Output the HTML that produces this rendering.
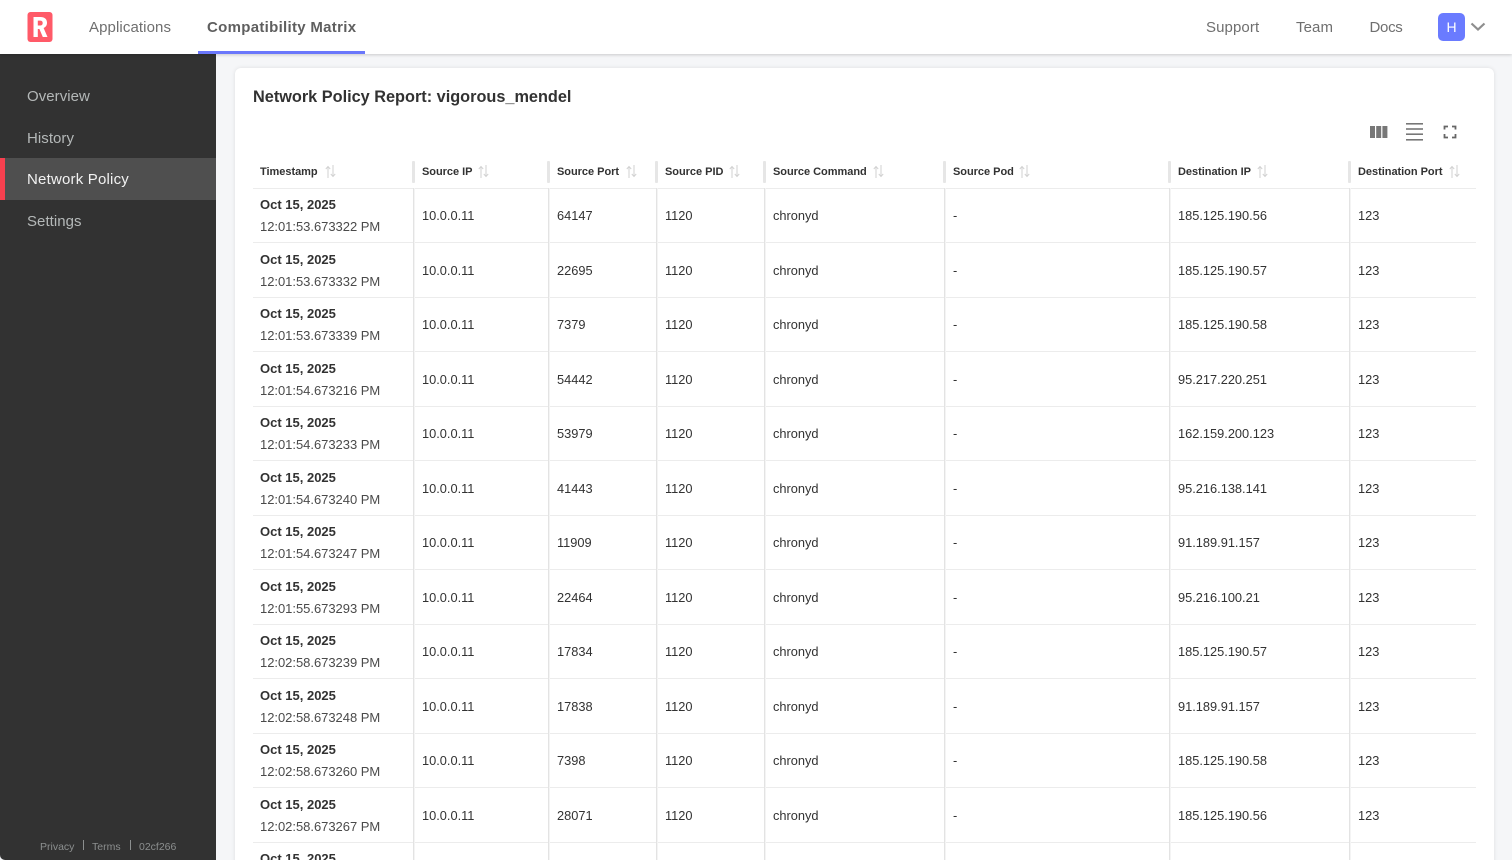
<!DOCTYPE html>
<html><head><meta charset="utf-8"><title>Network Policy</title>
<style>
*{box-sizing:border-box}
html,body{margin:0;padding:0;width:1512px;height:860px;overflow:hidden;background:#f5f6f8;font-family:"Liberation Sans",sans-serif;color:#323232}
#wrap{position:absolute;left:0;top:0;width:1512px;height:860px;overflow:hidden;background:#f5f6f8}
.a{position:absolute;white-space:nowrap}
#top{position:absolute;left:0;top:0;width:1512px;height:54px;background:#fff;box-shadow:0 1px 3px rgba(0,0,0,.18);z-index:3}
.nav{font-size:15px;color:#6f6f6f;line-height:20px;top:18px;letter-spacing:.1px}
#side{position:absolute;left:0;top:54px;width:216px;height:806px;background:#323232;border-bottom-left-radius:5px;z-index:2}
.si{position:absolute;left:27px;font-size:15px;line-height:20px;color:#b4b8b8;letter-spacing:.05px}
.ft{font-size:10.5px;color:#8c8f8f;line-height:14px;top:786px}
#card{position:absolute;left:235px;top:68px;width:1259px;height:820px;background:#fff;border-radius:6px;box-shadow:0 0 4px rgba(0,0,0,.1)}
.th{position:absolute;top:165px;font-size:11px;font-weight:bold;line-height:14px;color:#323232;white-space:nowrap;letter-spacing:-.03px}
.hd{position:absolute;top:161px;width:3px;height:22px;background:#e6e6e6;border-radius:1px}
.vl{position:absolute;top:188px;width:2px;height:672px;background:linear-gradient(90deg,#e3e3e3 50%,#f4f4f4 50%)}
.s{position:absolute;top:165px}
.row{position:absolute;left:253px;width:1223px;height:54.5px;border-top:1px solid #ececec}
.row div{position:absolute;white-space:nowrap;font-size:12.8px;line-height:16px;top:19.3px;color:#323232}
.row .d{left:7px;top:8.3px;font-size:13px;font-weight:bold;color:#323232}
.row .t{left:7px;top:30.3px;font-size:13px;color:#4a4a4a;letter-spacing:-.03px}
.c2{left:169px}.c3{left:304px}.c4{left:412px}.c5{left:520px}.c6{left:700px}.c7{left:925px}.c8{left:1105px}
</style></head><body>
<div id="wrap">
<div id="top">
<svg class="a" style="left:27px;top:12px" width="26" height="30" viewBox="0 0 26 30"><rect x="0.5" y="0" width="25" height="30" rx="3" fill="#ff5a68"/><path d="M6.500 25V5h7c4 0 6.500 2 6.500 5.800 0 2.600-1.300 4.400-3.400 5.200L20.500 25h-4.700l-3.400-8H10.800v8zM10.800 13.500h2.300c1.700 0 2.600-.9 2.600-2.500s-.9-2.400-2.600-2.400h-2.300z" fill="#fff" fill-rule="evenodd"/></svg>
<span class="a nav" style="left:89px">Applications</span>
<span class="a nav" style="left:207px;font-weight:bold;color:#5f5f5f;letter-spacing:.3px">Compatibility Matrix</span>
<div class="a" style="left:198px;top:51px;width:167px;height:3px;background:#6a77fb"></div>
<span class="a nav" style="left:1206px">Support</span>
<span class="a nav" style="left:1296px">Team</span>
<span class="a nav" style="left:1369.500px;letter-spacing:-.3px">Docs</span>
<div class="a" style="left:1438px;top:13px;width:27px;height:28px;background:#6a7bff;border-radius:5px;color:#fff;font-size:14px;line-height:28px;text-align:center">H</div>
<svg class="a" style="left:1470px;top:21px" width="16" height="12" viewBox="0 0 16 12"><path d="M1.500 2.500L8 8.500l6.500-6" fill="none" stroke="#8e8e8e" stroke-width="2.200"/></svg>
</div>
<div id="side">
<span class="si" style="top:33px">Overview</span>
<span class="si" style="top:75px">History</span>
<div class="a" style="left:0;top:104px;width:216px;height:42px;background:#4f4f4f"></div>
<div class="a" style="left:0;top:104px;width:5px;height:42px;background:#f7404f"></div>
<span class="si" style="top:116px;color:#f2f2f2;letter-spacing:.2px">Network Policy</span>
<span class="si" style="top:158px">Settings</span>
<span class="a ft" style="left:40px">Privacy</span>
<div class="a" style="left:83px;top:786px;width:1px;height:10px;background:#8c8f8f"></div>
<span class="a ft" style="left:92px">Terms</span>
<div class="a" style="left:130px;top:786px;width:1px;height:10px;background:#8c8f8f"></div>
<span class="a ft" style="left:139px">02cf266</span>
</div>
<div id="card"></div>
<div class="a" style="left:253px;top:87px;font-size:16.3px;font-weight:bold;line-height:20px;color:#323232">Network Policy Report: vigorous_mendel</div>
<svg class="a" style="left:1370px;top:123px" width="90" height="18" viewBox="0 0 90 18"><g fill="#777"><rect x="0" y="3" width="5" height="12"/><rect x="6.200" y="3" width="5" height="12"/><rect x="12.400" y="3" width="5" height="12"/><rect x="36" y="0" width="17" height="1.600"/><rect x="36" y="5.200" width="17" height="1.600"/><rect x="36" y="10.400" width="17" height="1.600"/><rect x="36" y="16" width="17" height="1.600"/></g><path d="M74.500 6.500V3.500H78M82 3.500h3.500v3M85.500 11v3.500H82M78 14.500h-3.500V11" fill="none" stroke="#666" stroke-width="1.800"/></svg>

<div class="th" style="left:260px">Timestamp</div>
<div class="th" style="left:422px">Source IP</div>
<div class="th" style="left:557px">Source Port</div>
<div class="th" style="left:665px">Source PID</div>
<div class="th" style="left:773px">Source Command</div>
<div class="th" style="left:953px">Source Pod</div>
<div class="th" style="left:1178px">Destination IP</div>
<div class="th" style="left:1358px">Destination Port</div>
<svg width="0" height="0" style="position:absolute"><defs><symbol id="s" viewBox="0 0 11 13"><path d="M3 13V1.500M.8 4L3 1.500 5.200 4M8 0v11.500M5.800 9L8 11.500 10.200 9" fill="none" stroke="#d2d2d2" stroke-width="1"/></symbol></defs></svg>
<svg class="s" style="left:325px" width="11" height="13"><use href="#s"/></svg>
<svg class="s" style="left:478px" width="11" height="13"><use href="#s"/></svg>
<svg class="s" style="left:626px" width="11" height="13"><use href="#s"/></svg>
<svg class="s" style="left:729px" width="11" height="13"><use href="#s"/></svg>
<svg class="s" style="left:873px" width="11" height="13"><use href="#s"/></svg>
<svg class="s" style="left:1019px" width="11" height="13"><use href="#s"/></svg>
<svg class="s" style="left:1257px" width="11" height="13"><use href="#s"/></svg>
<svg class="s" style="left:1449px" width="11" height="13"><use href="#s"/></svg>
<div class="hd" style="left:412px"></div><div class="hd" style="left:547px"></div><div class="hd" style="left:655px"></div><div class="hd" style="left:763px"></div><div class="hd" style="left:943px"></div><div class="hd" style="left:1168px"></div><div class="hd" style="left:1348px"></div>

<div class="row" style="top:187.750px"><div class="d">Oct 15, 2025</div><div class="t">12:01:53.673322 PM</div><div class="c2">10.0.0.11</div><div class="c3">64147</div><div class="c4">1120</div><div class="c5">chronyd</div><div class="c6">-</div><div class="c7">185.125.190.56</div><div class="c8">123</div></div>
<div class="row" style="top:242.250px"><div class="d">Oct 15, 2025</div><div class="t">12:01:53.673332 PM</div><div class="c2">10.0.0.11</div><div class="c3">22695</div><div class="c4">1120</div><div class="c5">chronyd</div><div class="c6">-</div><div class="c7">185.125.190.57</div><div class="c8">123</div></div>
<div class="row" style="top:296.750px"><div class="d">Oct 15, 2025</div><div class="t">12:01:53.673339 PM</div><div class="c2">10.0.0.11</div><div class="c3">7379</div><div class="c4">1120</div><div class="c5">chronyd</div><div class="c6">-</div><div class="c7">185.125.190.58</div><div class="c8">123</div></div>
<div class="row" style="top:351.250px"><div class="d">Oct 15, 2025</div><div class="t">12:01:54.673216 PM</div><div class="c2">10.0.0.11</div><div class="c3">54442</div><div class="c4">1120</div><div class="c5">chronyd</div><div class="c6">-</div><div class="c7">95.217.220.251</div><div class="c8">123</div></div>
<div class="row" style="top:405.750px"><div class="d">Oct 15, 2025</div><div class="t">12:01:54.673233 PM</div><div class="c2">10.0.0.11</div><div class="c3">53979</div><div class="c4">1120</div><div class="c5">chronyd</div><div class="c6">-</div><div class="c7">162.159.200.123</div><div class="c8">123</div></div>
<div class="row" style="top:460.250px"><div class="d">Oct 15, 2025</div><div class="t">12:01:54.673240 PM</div><div class="c2">10.0.0.11</div><div class="c3">41443</div><div class="c4">1120</div><div class="c5">chronyd</div><div class="c6">-</div><div class="c7">95.216.138.141</div><div class="c8">123</div></div>
<div class="row" style="top:514.750px"><div class="d">Oct 15, 2025</div><div class="t">12:01:54.673247 PM</div><div class="c2">10.0.0.11</div><div class="c3">11909</div><div class="c4">1120</div><div class="c5">chronyd</div><div class="c6">-</div><div class="c7">91.189.91.157</div><div class="c8">123</div></div>
<div class="row" style="top:569.250px"><div class="d">Oct 15, 2025</div><div class="t">12:01:55.673293 PM</div><div class="c2">10.0.0.11</div><div class="c3">22464</div><div class="c4">1120</div><div class="c5">chronyd</div><div class="c6">-</div><div class="c7">95.216.100.21</div><div class="c8">123</div></div>
<div class="row" style="top:623.750px"><div class="d">Oct 15, 2025</div><div class="t">12:02:58.673239 PM</div><div class="c2">10.0.0.11</div><div class="c3">17834</div><div class="c4">1120</div><div class="c5">chronyd</div><div class="c6">-</div><div class="c7">185.125.190.57</div><div class="c8">123</div></div>
<div class="row" style="top:678.250px"><div class="d">Oct 15, 2025</div><div class="t">12:02:58.673248 PM</div><div class="c2">10.0.0.11</div><div class="c3">17838</div><div class="c4">1120</div><div class="c5">chronyd</div><div class="c6">-</div><div class="c7">91.189.91.157</div><div class="c8">123</div></div>
<div class="row" style="top:732.750px"><div class="d">Oct 15, 2025</div><div class="t">12:02:58.673260 PM</div><div class="c2">10.0.0.11</div><div class="c3">7398</div><div class="c4">1120</div><div class="c5">chronyd</div><div class="c6">-</div><div class="c7">185.125.190.58</div><div class="c8">123</div></div>
<div class="row" style="top:787.250px"><div class="d">Oct 15, 2025</div><div class="t">12:02:58.673267 PM</div><div class="c2">10.0.0.11</div><div class="c3">28071</div><div class="c4">1120</div><div class="c5">chronyd</div><div class="c6">-</div><div class="c7">185.125.190.56</div><div class="c8">123</div></div>
<div class="row" style="top:841.750px"><div class="d">Oct 15, 2025</div></div>
<div class="vl" style="left:413px"></div><div class="vl" style="left:548px"></div><div class="vl" style="left:656px"></div><div class="vl" style="left:764px"></div><div class="vl" style="left:944px"></div><div class="vl" style="left:1169px"></div><div class="vl" style="left:1349px"></div>
</div>
</body></html>
